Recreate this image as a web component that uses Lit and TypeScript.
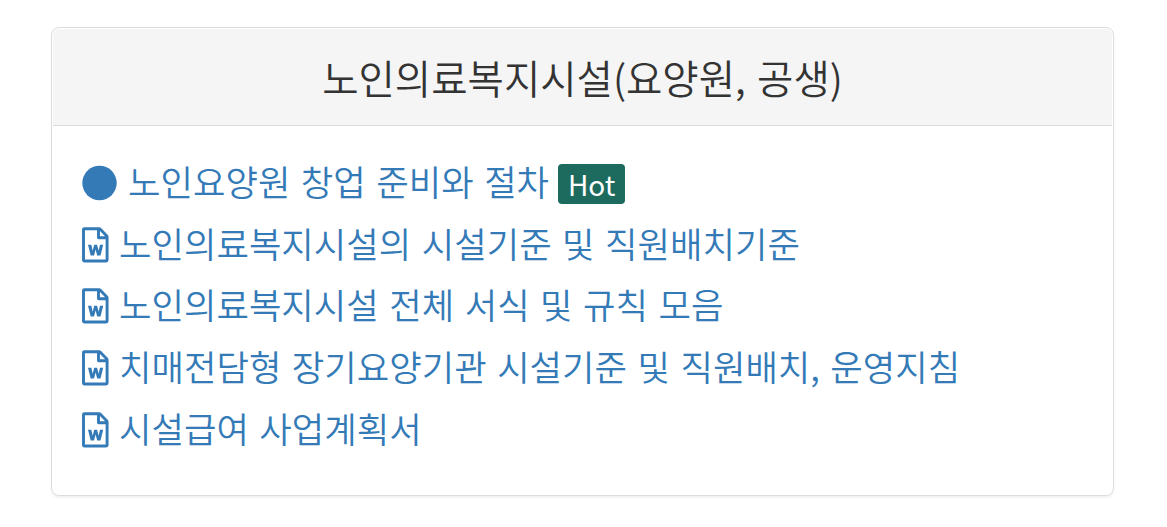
import { LitElement, html, css } from 'lit';
import { customElement, property } from 'lit/decorators.js';

interface LinkItem {
    label: string;
    icon: 'circle' | 'word';
    badge?: string;
}

@customElement('file-icon')
export class FileIcon extends LitElement {

    @property({ type: String }) name = 'word';

    static styles = css`
        :host {
            display: inline-flex;
            flex: none;
        }
        svg {
            display: block;
            fill: currentColor;
        }
        .outline {
            fill: none;
            stroke: currentColor;
            stroke-width: 2.9;
            stroke-linejoin: round;
        }
    `;

    render() {
        if (this.name === 'circle') {
            return html`
            <svg width="35" height="36" viewBox="0 0 35 36">
                <circle cx="17.5" cy="18" r="17.2"></circle>
            </svg>
            `;
        }
        return html`
        <svg width="27" height="36" viewBox="0 0 27 36">
            <path class="outline" d="M2.600 1.700H17.200Q17.800 1.700 18.300 2.200L24.600 8.700Q25.100 9.200 25.100 9.800V33Q25.100 34 24.100 34H2.600Q1.500 34 1.500 33V2.700Q1.500 1.700 2.600 1.700ZM16.500 1.700V10.800H25.100"></path>
            <path d="M6 17.700H9.300L10.700 23.800L12.200 17.700H15.100L16.600 23.800L18 17.700H21.200L18.500 28.500H15.200L13.600 22.500L12 28.500H8.700Z"></path>
        </svg>
        `;
    }
}

@customElement('app-root')
export class AppRoot extends LitElement {

    private heading = '노인의료복지시설(요양원, 공생)';

    private items: LinkItem[] = [
        { label: '노인요양원 창업 준비와 절차', icon: 'circle', badge: 'Hot' },
        { label: '노인의료복지시설의 시설기준 및 직원배치기준', icon: 'word' },
        { label: '노인의료복지시설 전체 서식 및 규칙 모음', icon: 'word' },
        { label: '치매전담형 장기요양기관 시설기준 및 직원배치, 운영지침', icon: 'word' },
        { label: '시설급여 사업계획서', icon: 'word' }
    ];

    static styles = css`
        :host {
            display: block;
            box-sizing: border-box;
            height: 527px;
            padding: 27px 53px 31px 51px;
            background: #fff;
            font-family: 'Noto Sans CJK KR', sans-serif;
            font-weight: 350;
        }
        .panel {
            box-sizing: border-box;
            height: 469px;
            padding: 1px;
            border: 1px solid #ddd;
            border-radius: 8px;
            box-shadow: 0 2px 2px rgba(0, 0, 0, 0.05);
            background: #fff;
        }
        .heading {
            box-sizing: border-box;
            height: 97px;
            margin: 0;
            border-bottom: 1px solid #ddd;
            border-radius: 6px 6px 0 0;
            background: #f5f5f5;
            color: #333;
            font-size: 39.500px;
            font-weight: inherit;
            line-height: 96px;
            text-align: center;
            word-spacing: 2.600px;
        }
        .list {
            margin: 0;
            padding: 26px 29px;
            list-style: none;
        }
        .item {
            height: 61.700px;
        }
        .link {
            display: flex;
            align-items: center;
            height: 61.700px;
            color: #337ab7;
            font-size: 35.300px;
            white-space: pre;
            text-decoration: none;
            word-spacing: 2.600px;
        }
        .label {
            margin-left: 10px;
            padding-bottom: 4px;
            line-height: 57.700px;
        }
        .circle {
            margin-left: 11px;
        }
        .badge {
            box-sizing: border-box;
            width: 67px;
            height: 40px;
            margin-top: 2px;
            margin-left: 9px;
            border-radius: 4px;
            background: #1d6b5f;
            color: #fff;
            font-size: 28px;
            font-weight: 400;
            line-height: 40px;
            text-align: center;
        }
    `;

    render() {
        return html`
        <section class="panel">
            <h3 class="heading">${this.heading}</h3>
            <ul class="list">
                ${this.items.map(item => html`
                <li class="item">
                    <a class="link">
                        <file-icon name=${item.icon}></file-icon>
                        <span class="label ${item.icon}">${item.label}</span>
                        ${item.badge ? html`<span class="badge">${item.badge}</span>` : ''}
                    </a>
                </li>
                `)}
            </ul>
        </section>
        `;
    }
}
